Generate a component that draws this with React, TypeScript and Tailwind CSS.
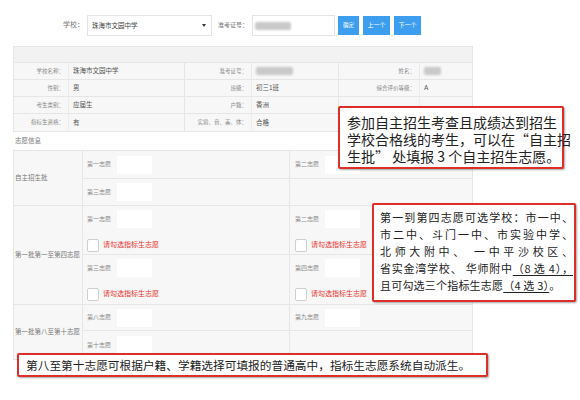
import React from 'react';

type Cell = string | null;

const infoRows: Cell[][] = [
  ['学校名称：', '珠海市文园中学', '准考证号：', null, '姓名：', null],
  ['性别：', '男', '班级：', '初三1班', '综合评价等级：', 'A'],
  ['考生类别：', '应届生', '户籍：', '香洲', '', ''],
  ['指标生资格：', '有', '实验、音、美、体：', '合格', '', ''],
];

const Blur = ({ w }: { w: string }) => (
  <span className={`inline-block ${w} h-[8px] rounded-[2px] bg-[#c9c9c9] blur-[1.2px]`} />
);

const Box = () => <div className="w-[35px] h-[18px] bg-white" />;

const Pick = ({ label, pad }: { label: string; pad: string }) => (
  <div className={`flex items-center h-[18px] ${pad}`}>
    <span className="w-[30px] whitespace-nowrap text-[6px] text-[#888]">{label}</span>
    <Box />
  </div>
);

const Check = ({ pad }: { pad: string }) => (
  <div className={`flex items-center h-[13px] ${pad}`}>
    <span className="w-[12px] h-[13px] rounded-[2px] border border-[#cfcfcf] bg-white" />
    <span className="ml-[4px] whitespace-nowrap text-[7px] text-[#e8342f]">请勾选指标生志愿</span>
  </div>
);

const SectionLabel = ({ text }: { text: string }) => (
  <div className="w-[69px] shrink-0 flex items-center pl-[1px] border-r border-[#e6e6e6] whitespace-nowrap text-[6.5px] text-[#777]">
    {text}
  </div>
);

export default function App() {
  return (
    <div className="relative w-[580px] h-[400px] overflow-hidden bg-white font-['Liberation_Sans','Noto_Sans_CJK_SC',sans-serif] text-[#666]">
      {/* search bar */}
      <div className="flex items-center h-[21px] mt-[15px] pl-[63px]">
        <span className="w-[24px] text-[7px] text-[#777]">学校：</span>
        <div className="flex items-center justify-between w-[125px] h-[21px] pl-[4px] pr-[5px] border border-[#e4e4e4] text-[6.5px] text-[#444]">
          <span>珠海市文园中学</span>
          <svg width="4" height="3" viewBox="0 0 4 3">
            <path d="M0 0h4L2 3z" fill="#333" />
          </svg>
        </div>
        <span className="ml-[6px] w-[34px] whitespace-nowrap text-[6px] text-[#777]">准考证号：</span>
        <div className="flex items-center w-[83px] h-[21px] pl-[2px] border border-[#e4e4e4]">
          <Blur w="w-[36px]" />
        </div>
        <button className="ml-[3px] w-[21px] h-[19px] bg-[#3d9ef0] text-[5.5px] text-white">确定</button>
        <button className="ml-[4px] w-[27px] h-[19px] bg-[#3d9ef0] text-[6px] text-white">上一个</button>
        <button className="ml-[4px] w-[27px] h-[19px] bg-[#3d9ef0] text-[6px] text-white">下一个</button>
      </div>

      {/* student info */}
      <div className="mt-[10px] ml-[13px] w-[460px] border border-[#e6e6e6] bg-[#f7f7f7]">
        <div className="h-[16px] border-b border-[#e6e6e6] bg-[#f2f2f2]" />
        {infoRows.map((row, i) => (
          <div
            key={i}
            className="grid grid-cols-[54px_116px_67px_87px_81px_53px] h-[17px] border-b border-[#e6e6e6] last:border-b-0"
          >
            {row.map((cell, j) => {
              const isLabel = j % 2 === 0;
              const blurW = j === 3 ? 'w-[37px]' : 'w-[17px]';
              return (
                <div
                  key={j}
                  className={
                    isLabel
                      ? `flex items-center justify-end pr-[4px] whitespace-nowrap text-[5.5px] text-[#888] ${j > 0 ? 'border-l border-[#e6e6e6]' : ''}`
                      : 'flex items-center pl-[4px] border-l border-[#ececec] whitespace-nowrap text-[6.5px] text-[#555]'
                  }
                >
                  {cell === null ? <Blur w={blurW} /> : cell}
                </div>
              );
            })}
          </div>
        ))}
      </div>

      <div className="flex items-center h-[18px] pl-[15px] text-[6.5px] text-[#777]">志愿信息</div>

      {/* choices */}
      <div className="ml-[13px] w-[460px] border border-[#e6e6e6] bg-[#f7f7f7]">
        <div className="flex border-b border-[#e6e6e6]">
          <SectionLabel text="自主招生批" />
          <div className="flex-1">
            <div className="grid grid-cols-[206px_1fr] h-[28px] border-b border-[#e6e6e6]">
              <div className="flex items-center"><Pick label="第一志愿" pad="pl-[4px]" /></div>
              <div className="flex items-center border-l border-[#e6e6e6]"><Pick label="第二志愿" pad="pl-[5px]" /></div>
            </div>
            <div className="grid grid-cols-[206px_1fr] h-[26px]">
              <div className="flex items-center"><Pick label="第三志愿" pad="pl-[4px]" /></div>
              <div className="border-l border-[#e6e6e6]" />
            </div>
          </div>
        </div>

        <div className="flex border-b border-[#e6e6e6]">
          <SectionLabel text="第一批第一至第四志愿" />
          <div className="flex-1">
            {[
              ['第一志愿', '第二志愿'],
              ['第三志愿', '第四志愿'],
            ].map(([a, b], i) => (
              <div
                key={i}
                className="grid grid-cols-[206px_1fr] h-[49px] border-b border-[#e6e6e6] last:border-b-0"
              >
                <div className="flex flex-col gap-[11px] pt-[4px]">
                  <Pick label={a} pad="pl-[4px]" />
                  <Check pad="pl-[4px]" />
                </div>
                <div className="flex flex-col gap-[11px] pt-[4px] border-l border-[#e6e6e6]">
                  <Pick label={b} pad="pl-[5px]" />
                  <Check pad="pl-[5px]" />
                </div>
              </div>
            ))}
          </div>
        </div>

        <div className="flex">
          <SectionLabel text="第一批第八至第十志愿" />
          <div className="flex-1">
            <div className="grid grid-cols-[206px_1fr] h-[26px] border-b border-[#e6e6e6]">
              <div className="flex items-center"><Pick label="第八志愿" pad="pl-[4px]" /></div>
              <div className="flex items-center border-l border-[#e6e6e6]"><Pick label="第九志愿" pad="pl-[5px]" /></div>
            </div>
            <div className="grid grid-cols-[206px_1fr] h-[28px]">
              <div className="flex items-center"><Pick label="第十志愿" pad="pl-[4px]" /></div>
              <div className="border-l border-[#e6e6e6]" />
            </div>
          </div>
        </div>
      </div>

      {/* callouts */}
      <div className="absolute left-[338px] top-[106px] w-[226px] h-[63px] pl-[7px] pt-[6px] border-2 border-[#dc2f2a] rounded-[2px] bg-white shadow-[1px_1px_2px_rgba(0,0,0,0.35)] text-[14px] leading-[17px] text-[#222] whitespace-nowrap font-['Noto_Sans_CJK_SC',sans-serif]">
        <div>参加自主招生考查且成绩达到招生</div>
        <div>学校合格线的考生，可以在“自主招</div>
        <div>生批” 处填报 3 个自主招生志愿。</div>
      </div>

      <div className="absolute left-[372px] top-[203px] w-[204px] h-[99px] pl-[6px] pr-[1px] pt-[4px] border-2 border-[#dc2f2a] rounded-[2px] bg-white shadow-[1px_1px_2px_rgba(0,0,0,0.35)] text-[11px] leading-[17px] text-[#222] font-['Noto_Sans_CJK_SC',sans-serif]">
        <div className="text-justify [text-align-last:justify] whitespace-nowrap">第一到第四志愿可选学校：市一中、</div>
        <div className="text-justify [text-align-last:justify] whitespace-nowrap">市二中、斗门一中、市实验中学、</div>
        <div className="text-justify [text-align-last:justify] whitespace-nowrap">北师大附中、 一中平沙校区、</div>
        <div className="text-justify [text-align-last:justify] whitespace-nowrap">
          省实金湾学校、 华师附中<span className="underline underline-offset-2">（8 选 4），</span>
        </div>
        <div className="whitespace-nowrap tracking-[0.2px]">
          且可勾选三个指标生志愿<span className="underline underline-offset-2">（4 选 3）</span>。
        </div>
      </div>

      <div className="absolute left-[17px] top-[353px] w-[471px] h-[24px] flex items-center pl-[7px] border-2 border-[#dc2f2a] rounded-[2px] bg-white shadow-[1px_1px_2px_rgba(0,0,0,0.35)] text-[11.7px] text-[#222] whitespace-nowrap font-['Noto_Sans_CJK_SC',sans-serif]">
        第八至第十志愿可根据户籍、学籍选择可填报的普通高中，指标生志愿系统自动派生。
      </div>
    </div>
  );
}
